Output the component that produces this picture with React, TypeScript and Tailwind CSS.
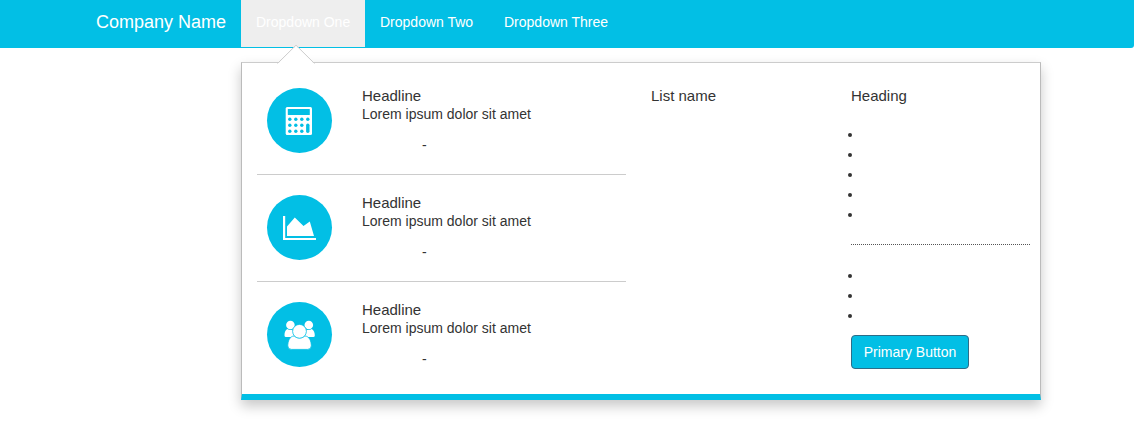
import type { ReactNode } from 'react';

function CalculatorIcon() {
  const dots = [0, 1, 2].flatMap((row) => [0, 1, 2, 3].map((col) => ({ row, col })));
  return (
    <svg className="absolute inset-0 size-full" viewBox="0 0 65 65">
      <rect x="18.7" y="19" width="26.3" height="28" rx="1.5" fill="#fff" />
      <rect x="20.8" y="21" width="22" height="6" rx="0.5" fill="#02bfe5" />
      {dots
        .filter((d) => !(d.col === 3 && d.row > 0))
        .map((d) => (
          <circle key={`${d.row}-${d.col}`} cx={22.8 + d.col * 6} cy={31.2 + d.row * 6} r="1.7" fill="#02bfe5" />
        ))}
      <rect x="39.1" y="35.5" width="3.4" height="9.4" rx="1.7" fill="#02bfe5" />
    </svg>
  );
}

function AreaChartIcon() {
  return (
    <svg className="absolute inset-0 size-full" viewBox="0 0 65 65" fill="#fff">
      <path d="M16 21h2.2v22H49V45H16z" />
      <path d="M20 41V31.5L27.8 22.5L36.5 31L42.8 26.6L47 41z" />
    </svg>
  );
}

function UsersIcon() {
  return (
    <svg className="absolute inset-0 size-full" viewBox="0 0 65 65" fill="#fff">
      <circle cx="23.4" cy="23" r="4.3" />
      <circle cx="41.8" cy="23" r="4.3" />
      <path d="M20.2 27C18 28.2 17.5 31 17.5 33.5Q17.5 35 19 35H28V31.5Q25.5 30.2 25.6 27.4Q23 28.8 20.2 27z" />
      <path d="M44.8 27C47 28.2 47.8 31 47.8 33.5Q47.8 35 46.3 35H37V31.5Q39.5 30.2 39.4 27.4Q42 28.8 44.8 27z" />
      <g stroke="#02bfe5" strokeWidth="0.8">
        <path d="M27 34C22.5 34.3 20.8 39.5 20.8 43.8Q20.8 47.4 24.5 47.4H40.6Q44.3 47.4 44.3 43.8C44.3 39.5 42.6 34.3 38 34Q32.5 38 27 34z" />
        <circle cx="32.5" cy="29.3" r="6.9" />
      </g>
    </svg>
  );
}

function Feature({ icon, last = false }: { icon: ReactNode; last?: boolean }) {
  return (
    <div className={`flex h-[107px] pl-[10px] pt-5 ${last ? '' : 'border-b border-[#ccc]'}`}>
      <div className="relative size-[65px] shrink-0 rounded-full bg-[#02bfe5]">{icon}</div>
      <div className="-mt-px ml-[30px]">
        <h3 className="text-[15px] leading-[17px]">Headline</h3>
        <p className="text-[14px] leading-5">Lorem ipsum dolor sit amet</p>
        <p className="mt-[11px] pl-[60px] text-[14px] leading-5">-</p>
      </div>
    </div>
  );
}

function Bullets({ count }: { count: number }) {
  return (
    <ul className="-ml-[3px]">
      {Array.from({ length: count }, (_, i) => (
        <li key={i} className="flex h-5 items-center">
          <span className="size-1 rounded-full bg-[#333]" />
        </li>
      ))}
    </ul>
  );
}

export default function App() {
  return (
    <div className="h-[424px] overflow-hidden bg-white font-['Liberation_Sans',Arial,sans-serif] text-[#333]">
      <nav className="flex h-12 rounded-br-[3px] bg-[#02bfe5] pl-24 text-[14px] leading-5 text-white">
        <a className="w-[145px] whitespace-nowrap pt-3 text-[18px]">Company Name</a>
        <a className="h-[47px] w-[124px] whitespace-nowrap bg-[#eee] pl-[15px] pt-3">Dropdown One</a>
        <a className="w-[124px] px-[15px] pt-3">Dropdown Two</a>
        <a className="px-[15px] pt-3">Dropdown Three</a>
      </nav>

      <section className="relative ml-[241px] mt-[14px] flex h-[338px] w-[800px] border border-b-[6px] border-[#bbb] border-t-[#ccc] border-b-[#02bfe5] bg-white pl-[15px] pt-[5px] shadow-[0_6px_12px_rgba(0,0,0,0.22)]">
        <svg className="absolute -top-[19px] left-[34px] h-5 w-10" viewBox="0 0 40 20">
          <path d="M1.5 20L20 1.5L38.5 20z" fill="#fff" />
          <path d="M1.5 19.5L20 1.2L38.5 19.5" fill="none" stroke="#ccc" />
        </svg>
        <div className="w-[369px]">
          <Feature icon={<CalculatorIcon />} />
          <Feature icon={<AreaChartIcon />} />
          <Feature icon={<UsersIcon />} last />
        </div>
        <div className="ml-[25px] w-[200px] pt-[19px]">
          <h3 className="text-[15px] leading-[17px]">List name</h3>
        </div>
        <div className="w-[179px] pt-[19px]">
          <h3 className="text-[15px] leading-[17px]">Heading</h3>
          <div className="mt-[21px]">
            <Bullets count={5} />
          </div>
          <hr className="mb-[21px] mt-[19px] border-t border-dotted border-[#555]" />
          <Bullets count={3} />
          <button className="mt-[9px] h-[34px] w-[118px] rounded-[4px] border border-[#2e6d88] bg-[#02bfe5] text-[14px] leading-5 text-white">
            Primary Button
          </button>
        </div>
      </section>
    </div>
  );
}
